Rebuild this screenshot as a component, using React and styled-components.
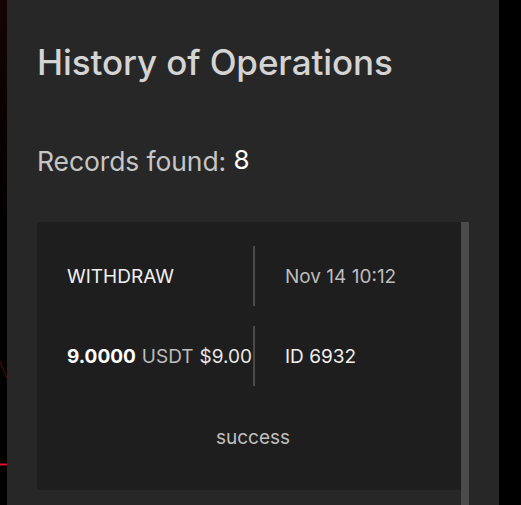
import styled, { createGlobalStyle } from "styled-components";

const GlobalStyle = createGlobalStyle`
  html, body {
    margin: 0;
    padding: 0;
    background: #000;
    overflow: hidden;
  }
  #root {
    height: 505px;
  }
`;

const Page = styled.div`
  display: flex;
  height: 505px;
  background: #000;
  font-family: "Inter", "Noto Sans", sans-serif;
`;

const Backdrop = styled.div`
  width: 7px;
  flex-shrink: 0;
  background: linear-gradient(#150303, #000 45%);
  overflow: hidden;
`;

const Panel = styled.div`
  width: 492px;
  flex-shrink: 0;
  background: #272727;
  padding: 40px 30px 0 30px;
  box-sizing: border-box;
  display: flex;
  flex-direction: column;
`;

const Title = styled.h1`
  margin: 0;
  font-size: 35px;
  font-weight: 500;
  color: #d4d4d4;
  letter-spacing: -0.1px;
  line-height: 44px;
`;

const Records = styled.div`
  margin-top: 62px;
  font-size: 26.5px;
  color: #c6c6c6;
  line-height: 30px;
  letter-spacing: -0.1px;
`;

const Count = styled.span`
  color: #fff;
  font-size: 26px;
  position: relative;
  top: -2px;
`;

const Scroller = styled.div`
  margin-top: 45px;
  flex: 1;
  display: flex;
  width: 432px;
`;

const List = styled.div`
  flex: 1;
`;

const Thumb = styled.div`
  width: 8px;
  background: #4b4b4b;
`;

const Card = styled.div`
  background: #1e1e1e;
  padding: 24px 30px 0 30px;
  height: 268px;
  box-sizing: border-box;
`;

const Row = styled.div`
  display: grid;
  grid-template-columns: 188px 1fr;
  height: 60px;
  margin-bottom: ${({ $gap }) => $gap || 0}px;
`;

const Cell = styled.div`
  display: flex;
  align-items: center;
  font-size: 19px;
  color: ${({ $muted }) => ($muted ? "#bdbdbd" : "#f0f0f0")};
  border-right: ${({ $divider }) => ($divider ? "2px solid #4a4a4a" : "none")};
  padding-left: ${({ $divider }) => ($divider ? 0 : 30)}px;
  white-space: nowrap;
  letter-spacing: 0;
`;

const Amount = styled.b`
  color: #fff;
  font-weight: 700;
  margin-right: 6px;
`;

const Unit = styled.span`
  color: #bdbdbd;
  margin-right: 6px;
`;

const Fiat = styled.span`
  color: #e6e6e6;
`;

const Status = styled.div`
  text-align: center;
  font-size: 19px;
  color: #c0c0c0;
  margin-top: 40px;
  padding-left: 8px;
`;

export default function App() {
  return (
    <>
      <GlobalStyle />
      <Page>
        <Backdrop>
          <svg width="7" height="505" viewBox="0 0 7 505">
            <line x1="0" y1="362" x2="7" y2="378" stroke="#5a0a0a" strokeWidth="1" />
            <line x1="0" y1="464.5" x2="7" y2="464.5" stroke="#e0102a" strokeWidth="2" />
          </svg>
        </Backdrop>
        <Panel>
          <Title>History of Operations</Title>
          <Records>
            Records found: <Count>8</Count>
          </Records>
          <Scroller>
            <List>
              <Card>
                <Row $gap={20}>
                  <Cell $divider>WITHDRAW</Cell>
                  <Cell $muted>Nov 14 10:12</Cell>
                </Row>
                <Row>
                  <Cell $divider>
                    <Amount>9.0000</Amount>
                    <Unit>USDT</Unit>
                    <Fiat>$9.00</Fiat>
                  </Cell>
                  <Cell>ID 6932</Cell>
                </Row>
                <Status>success</Status>
              </Card>
            </List>
            <Thumb />
          </Scroller>
        </Panel>
      </Page>
    </>
  );
}
